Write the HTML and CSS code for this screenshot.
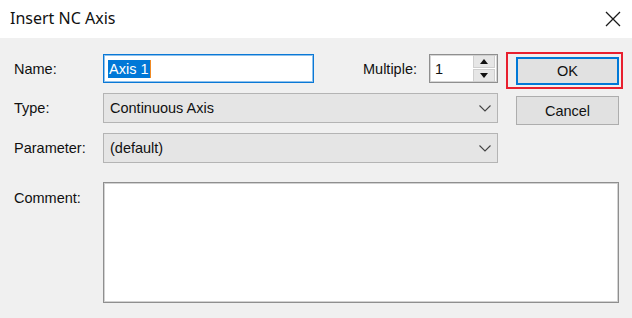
FILE: index.html
```html
<!DOCTYPE html>
<html lang="en">
<head>
    <meta charset="UTF-8">
    <meta name="viewport" content="width=device-width, initial-scale=1.0">
    <title>Insert NC Axis</title>
    <link rel="stylesheet" href="styles.css">
</head>
<body>
    <div class="dialog">
        <div class="titlebar">
            <span class="title">Insert NC Axis</span>
            <span class="close">
                <svg width="16" height="16" viewBox="0 0 16 16">
                    <path d="M1 1 L15 15 M15 1 L1 15" stroke="#1a1a1a" stroke-width="1.3" fill="none"/>
                </svg>
            </span>
        </div>

        <div class="content">
            <div class="label">Name:</div>
            <div class="name-row">
                <div class="textbox focused"><span class="selected">Axis 1</span></div>
                <div class="multiple">
                    <span class="label">Multiple:</span>
                    <div class="spin">
                        <span class="spin-value">1</span>
                        <div class="spin-buttons">
                            <span class="spin-btn">
                                <svg width="8" height="5" viewBox="0 0 8 5"><path d="M0 5 L4 0 L8 5 Z" fill="#111"/></svg>
                            </span>
                            <span class="spin-btn">
                                <svg width="8" height="5" viewBox="0 0 8 5"><path d="M0 0 L8 0 L4 5 Z" fill="#111"/></svg>
                            </span>
                        </div>
                    </div>
                </div>
            </div>
            <div class="spacer"></div>
            <div class="btn-cell">
                <div class="highlight">
                    <button class="btn default">OK</button>
                </div>
            </div>

            <div class="label">Type:</div>
            <div class="combo">
                <span>Continuous Axis</span>
                <svg width="12" height="7" viewBox="0 0 12 7"><path d="M0.5 0.5 L6 6 L11.5 0.5" stroke="#444" stroke-width="1.1" fill="none"/></svg>
            </div>
            <div class="spacer"></div>
            <div class="btn-cell">
                <button class="btn cancel">Cancel</button>
            </div>

            <div class="label">Parameter:</div>
            <div class="combo">
                <span>(default)</span>
                <svg width="12" height="7" viewBox="0 0 12 7"><path d="M0.5 0.5 L6 6 L11.5 0.5" stroke="#444" stroke-width="1.1" fill="none"/></svg>
            </div>
            <div class="spacer"></div>
            <div></div>

            <div class="label comment-label">Comment:</div>
            <div class="memo"></div>
        </div>
    </div>
</body>
</html>
```

FILE: styles.css
```css
body {
    margin: 0;
    background-color: #f0f0f0;
    font-family: "Liberation Sans", Arial, sans-serif;
    font-size: 14.5px;
    color: #111;
}
.dialog {
    width: 632px;
    height: 318px;
    background-color: #f0f0f0;
}
.titlebar {
    height: 38px;
    background-color: white;
    display: flex;
    align-items: center;
    justify-content: space-between;
    padding: 0 11px 3px 10px;
    box-sizing: border-box;
}
.title {
    font-family: "Noto Sans", "Open Sans", sans-serif;
    font-size: 16px;
    color: #111;
}
.close {
    display: flex;
    margin-top: 2px;
}
.content {
    display: grid;
    grid-template-columns: 89px 395px 18px 103px;
    grid-template-rows: 29px 30px 30px 119px;
    row-gap: 10px;
    padding: 16px 0 0 14px;
}
.label {
    display: flex;
    align-items: center;
    line-height: 18px;
}
.comment-label {
    align-items: flex-start;
    margin-top: 11px;
    padding-top: 5px;
}
.name-row {
    display: flex;
    justify-content: space-between;
    align-items: stretch;
}
.textbox {
    width: 211px;
    box-sizing: border-box;
    background-color: white;
    border: 1px solid #0a78d6;
    box-shadow: inset 0 0 0 1px #8ec1ec;
    display: flex;
    align-items: center;
    padding-left: 4px;
}
.selected {
    background-color: #0078d7;
    color: white;
    line-height: 18px;
    padding: 0 1px;
    border-right: 1px solid #f08a24;
}
.multiple {
    display: flex;
    align-items: center;
    gap: 12px;
}
.spin {
    width: 69px;
    height: 29px;
    box-sizing: border-box;
    border: 1px solid #8f8f8f;
    box-shadow: inset 0 0 0 1px #d6d6d6;
    background-color: white;
    display: flex;
    align-items: center;
    padding: 0 2px 0 5px;
}
.spin-value {
    flex: 1;
}
.spin-buttons {
    display: flex;
    flex-direction: column;
    gap: 1px;
}
.spin-btn {
    width: 20px;
    height: 11px;
    background-color: #e6e6e6;
    border: 1px solid #cfcfcf;
    display: flex;
    align-items: center;
    justify-content: center;
}
.combo {
    background-color: #e5e5e5;
    border: 1px solid #b4b4b4;
    display: flex;
    align-items: center;
    justify-content: space-between;
    padding: 0 6px 0 6px;
}
.btn-cell {
    display: flex;
    align-items: flex-start;
}
.highlight {
    position: relative;
    margin-top: 3px;
    width: 100%;
}
.highlight::before {
    content: "";
    position: absolute;
    top: -5px;
    left: -10px;
    right: -4px;
    bottom: -4px;
    border: 2px solid #e8202f;
}
.btn {
    display: block;
    width: 100%;
    font: inherit;
    color: #111;
    background-color: #e1e1e1;
    border: 1px solid #adadad;
    padding: 0;
    cursor: pointer;
}
.btn.default {
    height: 28px;
    border: 2px solid #0078d7;
}
.btn.cancel {
    height: 29px;
    margin-top: 3px;
}
.memo {
    grid-column: 2 / 5;
    margin-top: 9px;
    height: 119px;
    background-color: white;
    border: 1px solid #8f8f8f;
    box-shadow: inset 0 0 0 1px #d2d2d2;
}
```
